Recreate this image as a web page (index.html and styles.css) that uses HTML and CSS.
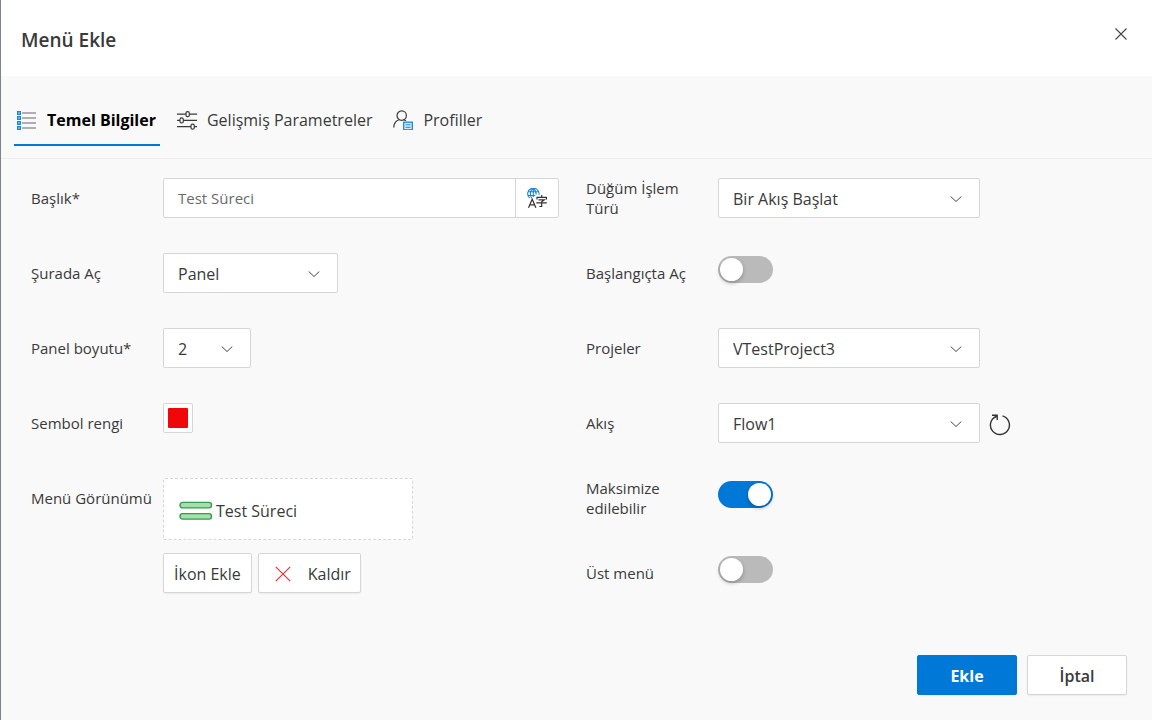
FILE: index.html
```html
<!DOCTYPE html>
<html lang="tr">
<head>
<meta charset="utf-8">
<meta name="viewport" content="width=device-width, initial-scale=1">
<title>Menü Ekle</title>
<link rel="stylesheet" href="styles.css">
</head>
<body>
<main class="dialog">
  <header class="dialog-header">
    <h1 class="dialog-title">Menü Ekle</h1>
    <button class="close" type="button" aria-label="Kapat">
      <svg width="12" height="12" viewBox="0 0 12 12"><path d="M.5.5l11 11M11.5.5l-11 11" stroke="#444" stroke-width="1.1" fill="none"/></svg>
    </button>
  </header>

  <nav class="tabs" role="tablist">
    <button class="tab tab-active" type="button" role="tab" aria-selected="true">
      <svg width="20" height="20" viewBox="0 0 20 20">
        <g fill="#5db1ee" stroke="#1a86d6"><rect x=".5" y="1.5" width="3" height="3"/><rect x=".5" y="6.5" width="3" height="3"/><rect x=".5" y="11.5" width="3" height="3"/><rect x=".5" y="16.5" width="3" height="3"/></g>
        <path d="M5 3h14M5 8h14M5 13h14M5 18h14" stroke="#979797" stroke-width="1.5"/>
      </svg>
      <span>Temel Bilgiler</span>
    </button>
    <button class="tab" type="button" role="tab" aria-selected="false">
      <svg width="20" height="20" viewBox="0 0 20 20" fill="none" stroke="#3a3a3a" stroke-width="1.2">
        <path d="M0 4.2h9M12.5 4.2H20M0 10.4h3M6.5 10.4H20M0 16.7h14M17.5 16.7H20"/>
        <rect x="9" y="1.7" width="3.3" height="5" rx="1.5"/><rect x="3" y="7.9" width="3.3" height="5" rx="1.5"/><rect x="14" y="14.2" width="3.3" height="5" rx="1.5"/>
      </svg>
      <span>Gelişmiş Parametreler</span>
    </button>
    <button class="tab" type="button" role="tab" aria-selected="false">
      <svg width="20" height="20" viewBox="0 0 20 20" fill="none">
        <circle cx="8.7" cy="5.6" r="4.7" stroke="#3a3a3a" stroke-width="1.2"/>
        <path d="M.8 17.5c0-4 2.200-6.600 5.200-7.700M11 9.700l2 1" stroke="#3a3a3a" stroke-width="1.2"/>
        <rect x="10.700" y="12.200" width="8.600" height="7.600" fill="#d9edfb" stroke="#1a86d6" stroke-width="1.3"/>
        <path d="M12.500 14.800h5M12.500 17.300h5" stroke="#1a86d6"/>
      </svg>
      <span>Profiller</span>
    </button>
  </nav>

  <form class="form">
    <div class="column">
      <div class="row">
        <label class="label" for="title">Başlık*</label>
        <div class="input-group">
          <input class="text-input" id="title" type="text" value="Test Süreci">
          <button class="translate" type="button" aria-label="Çeviri">
            <svg width="20" height="20" viewBox="0 0 20 20" fill="none">
              <g stroke="#1a86d6" stroke-width="1.1"><path d="M2.600 10A5.700 5.700 0 1 1 12 6.600M6.300.3C2.800 3 2.800 7 4.800 10.300M6.300.3c2.200 1.700 2.900 3.700 2.900 6.300M6.300.3V9M1.200 3.800h10.200M.8 7.500h7.500"/></g>
              <path d="M1.500 19.800L5.200 11.300 8.900 19.800M2.800 16.800h4.800" stroke="#333" stroke-width="1.2"/>
              <path d="M14.700 7v2M10 11.500V9.300h9.400v2.200M11.500 11.800h5.800l-2.600 2v4.700h-2.300M9.300 14.800h10.500" stroke="#333" stroke-width="1.2"/>
            </svg>
          </button>
        </div>
      </div>
      <div class="row">
        <label class="label" for="open-in">Şurada Aç</label>
        <div class="select select-medium">
          <select id="open-in"><option>Panel</option></select>
          <svg class="chevron" width="12" height="6" viewBox="0 0 12 6"><path d="M.7.5L6 5.500 11.300.5"/></svg>
        </div>
      </div>
      <div class="row">
        <label class="label" for="panel-size">Panel boyutu*</label>
        <div class="select select-small">
          <select id="panel-size"><option>2</option></select>
          <svg class="chevron" width="12" height="6" viewBox="0 0 12 6"><path d="M.7.5L6 5.500 11.300.5"/></svg>
        </div>
      </div>
      <div class="row">
        <label class="label" for="symbol-color">Sembol rengi</label>
        <input class="color" id="symbol-color" type="color" value="#f00808">
      </div>
      <div class="row">
        <span class="label">Menü Görünümü</span>
        <div class="appearance">
          <div class="preview">
            <svg width="34" height="20" viewBox="0 0 34 20" fill="#a5dfaa" stroke="#379a51" stroke-width="1.4"><rect x="1" y="1.400" width="31.500" height="5.500" rx="2.600"/><rect x="1" y="12.600" width="31.500" height="5.500" rx="2.600"/></svg>
            <span>Test Süreci</span>
          </div>
          <div class="actions">
            <button class="button" type="button">İkon Ekle</button>
            <button class="button button-remove" type="button">
              <svg width="16" height="16" viewBox="0 0 16 16"><path d="M.8.8l14.400 14.400M15.200.8L.8 15.200" stroke="#f03030" stroke-width="1.2"/></svg>
              <span>Kaldır</span>
            </button>
          </div>
        </div>
      </div>
    </div>

    <div class="column">
      <div class="row">
        <label class="label" for="node-type">Düğüm İşlem Türü</label>
        <div class="select">
          <select id="node-type"><option>Bir Akış Başlat</option></select>
          <svg class="chevron" width="12" height="6" viewBox="0 0 12 6"><path d="M.7.5L6 5.500 11.300.5"/></svg>
        </div>
      </div>
      <div class="row">
        <label class="label" for="open-start">Başlangıçta Aç</label>
        <input class="switch" id="open-start" type="checkbox" role="switch">
      </div>
      <div class="row">
        <label class="label" for="projects">Projeler</label>
        <div class="select">
          <select id="projects"><option>VTestProject3</option></select>
          <svg class="chevron" width="12" height="6" viewBox="0 0 12 6"><path d="M.7.5L6 5.500 11.300.5"/></svg>
        </div>
      </div>
      <div class="row">
        <label class="label" for="flow">Akış</label>
        <div class="select">
          <select id="flow"><option>Flow1</option></select>
          <svg class="chevron" width="12" height="6" viewBox="0 0 12 6"><path d="M.7.5L6 5.500 11.300.5"/></svg>
        </div>
        <button class="refresh" type="button" aria-label="Yenile">
          <svg width="22" height="22" viewBox="0 0 22 22" fill="none" stroke="#333" stroke-width="1.4"><path d="M13.500 1.900a9.500 9.500 0 1 1-6.300.4"/><path d="M3 1.200h5.200v4.800M8.200 1.200L5.200 4"/></svg>
        </button>
      </div>
      <div class="row">
        <label class="label" for="maximizable">Maksimize edilebilir</label>
        <input class="switch" id="maximizable" type="checkbox" role="switch" checked>
      </div>
      <div class="row">
        <label class="label" for="top-menu">Üst menü</label>
        <input class="switch" id="top-menu" type="checkbox" role="switch">
      </div>
    </div>
  </form>

  <footer class="dialog-footer">
    <button class="button button-wide button-primary" type="button">Ekle</button>
    <button class="button button-wide button-strong" type="button">İptal</button>
  </footer>
</main>
</body>
</html>
```
FILE: styles.css
```css
* {
  box-sizing: border-box;
}

body {
  margin: 0;
  background: #f9f9f9;
  color: #3a3a3a;
  font-family: "Segoe UI", "Open Sans", "Noto Sans", sans-serif;
  font-size: 16px;
}

button,
input,
select {
  margin: 0;
  color: inherit;
  font: inherit;
}

svg {
  display: block;
  flex: none;
}

.dialog {
  display: flex;
  flex-direction: column;
  min-height: 100vh;
  border-left: 1px solid #7f8290;
}

.dialog-header {
  display: flex;
  align-items: flex-start;
  justify-content: space-between;
  padding: 20px;
  background: #fff;
}

.dialog-title {
  margin: 0;
  font-size: 19px;
  font-weight: 600;
  line-height: 36px;
  padding-top: 2px;
  margin-bottom: -2px;
}

.close {
  padding: 8px 5px;
  border: 0;
  background: none;
}

.tabs {
  display: flex;
  gap: 14px;
  padding: 16px 13px 12px;
  border-bottom: 1px solid #ededed;
}

.tab {
  display: flex;
  align-items: center;
  gap: 10px;
  height: 54px;
  padding: 3px 4px 0 3px;
  border: 0;
  border-bottom: 2px solid transparent;
  background: none;
}

.tab-active {
  border-bottom-color: #0078d7;
  color: #000;
  font-weight: 700;
}

.form {
  display: grid;
  grid-template-columns: 1fr 1fr;
  padding: 19px 11px 0 30px;
}

.column {
  display: flex;
  flex-direction: column;
  gap: 35px;
}

.row {
  display: flex;
  align-items: flex-start;
  min-height: 40px;
}

.label {
  display: flex;
  flex: none;
  align-items: center;
  width: 132px;
  min-height: 40px;
  padding-right: 8px;
  font-size: 15px;
  line-height: 20px;
}

.input-group {
  display: flex;
  flex: 1;
  max-width: 396px;
  border: 1px solid #d6d6d6;
  border-radius: 2px;
  background: #fff;
}

.text-input {
  flex: 1;
  min-width: 0;
  height: 38px;
  padding: 0 14px;
  border: 0;
  background: none;
  color: #6a6a6a;
  font-size: 15px;
}

.translate {
  display: grid;
  place-items: center;
  width: 43px;
  padding: 0;
  border: 0;
  border-left: 1px solid #d6d6d6;
  background: none;
}

.select {
  position: relative;
  width: 262px;
}

.select-medium {
  width: 175px;
}

.select-small {
  width: 88px;
}

.select select {
  display: block;
  width: 100%;
  height: 40px;
  padding: 2px 36px 0 14px;
  border: 1px solid #d6d6d6;
  border-radius: 2px;
  background: #fff;
  appearance: none;
}

.chevron {
  position: absolute;
  top: 18px;
  right: 18px;
  fill: none;
  stroke: #444;
  pointer-events: none;
}

.color {
  width: 30px;
  height: 30px;
  padding: 4px;
  border: 1px solid #d6d6d6;
  border-radius: 2px;
  background: #fff;
  appearance: none;
}

.color::-webkit-color-swatch-wrapper {
  padding: 0;
}

.color::-webkit-color-swatch {
  border: 0;
  border-radius: 1px;
}

.appearance {
  display: flex;
  flex-direction: column;
  gap: 13px;
}

.preview {
  display: flex;
  align-items: center;
  gap: 3px;
  width: 250px;
  height: 62px;
  padding: 3px 15px 0;
  border: 1px dashed #d6d6d6;
  border-radius: 2px;
  background: #fff;
}

.actions {
  display: flex;
  gap: 6px;
}

.button {
  display: flex;
  align-items: center;
  justify-content: center;
  height: 40px;
  padding: 2px 10px 0;
  border: 1px solid #d6d6d6;
  border-radius: 2px;
  background: #fff;
  box-shadow: 0 1px 2px rgba(0, 0, 0, 0.06);
}

.button-remove {
  gap: 17px;
  padding: 2px 9px 0 16px;
}

.button-wide {
  width: 100px;
}

.button-strong {
  font-weight: 600;
}

.button-primary {
  border-color: #0078d7;
  background: #0078d7;
  color: #fff;
  font-weight: 700;
}

.refresh {
  height: 40px;
  padding: 4px 9px 0;
  border: 0;
  background: none;
}

.switch {
  width: 55px;
  height: 27px;
  margin-top: 3px;
  padding: 2px;
  border-radius: 14px;
  background: #bababa;
  appearance: none;
}

.switch::before {
  display: block;
  width: 23px;
  height: 23px;
  border-radius: 50%;
  background: #fff;
  box-shadow: 0 2px 4px rgba(0, 0, 0, 0.25);
  content: "";
}

.switch:checked {
  background: #0078d7;
}

.switch:checked::before {
  margin-left: auto;
}

.dialog-footer {
  display: flex;
  gap: 10px;
  justify-content: flex-end;
  margin-top: auto;
  padding: 25px;
}
```
